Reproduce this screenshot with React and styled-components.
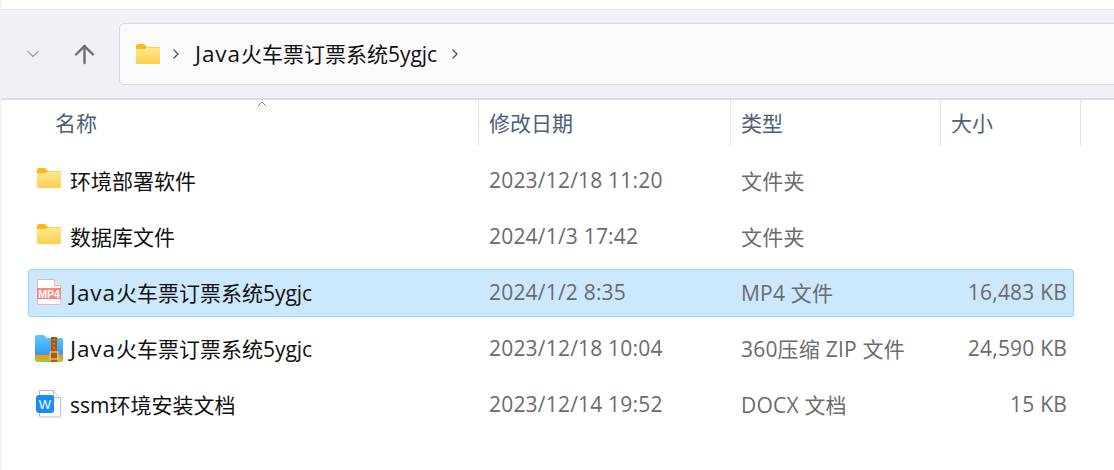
import React from "react";
import styled, { createGlobalStyle } from "styled-components";
import { ChevronDown, ChevronRight, ArrowUp, ChevronUp } from "lucide-react";

const FONT = `"Open Sans", "Noto Sans", "Noto Sans CJK SC", sans-serif`;

const Global = createGlobalStyle`
  html, body { margin: 0; padding: 0; background: #fff; }
  body { font-family: ${FONT}; width: 1114px; height: 470px; overflow: hidden; }
`;

const Page = styled.div`
  width: 1114px;
  height: 470px;
  box-sizing: border-box;
  padding-top: 9px;
  border-left: 1px solid #f0f0f0;
  overflow: hidden;
`;

const Toolbar = styled.div`
  height: 91px;
  margin-left: -1px;
  box-sizing: border-box;
  background: #f0f1f6;
  border-top: 1px solid #e6e6e8;
  border-bottom: 2px solid #dcdde0;
  display: flex;
  align-items: center;
  padding-left: 23px;
`;

const NavButton = styled.div`
  display: flex;
  align-items: center;
  justify-content: center;
  width: ${p => p.$w}px;
  margin-left: ${p => p.$ml || 0}px;
  color: ${p => p.$color};
`;

const AddressBox = styled.div`
  flex: 1;
  height: 62px;
  margin-right: -20px;
  box-sizing: border-box;
  background: #fafafd;
  border: 1px solid #d9d9dc;
  border-radius: 5px;
  display: flex;
  align-items: center;
  padding-left: 15px;
`;

const Crumb = styled.span`
  font-size: 21px;
  color: #111;
  margin: 0 10px 0 11px;
  line-height: 28px;
`;

const Sep = styled.span`
  display: flex;
  color: #555;
  margin-left: ${p => p.$ml || 0}px;
`;

const WideLatin = styled.span`
  font-size: 22.500px;
  letter-spacing: 0.900px;
`;

const Header = styled.div`
  display: grid;
  grid-template-columns: 478px 252px 210px 140px;
  height: 46px;
  position: relative;
`;

const HeadCell = styled.div`
  box-sizing: border-box;
  border-right: 1px solid #e4e4e4;
  padding-left: ${p => p.$pl || 10}px;
  font-size: 21px;
  line-height: 46px;
  color: #4c607a;
`;

const SortArrow = styled.div`
  position: absolute;
  left: 253px;
  top: -4px;
  color: #666;
  display: flex;
`;

const List = styled.div`
  display: flex;
  flex-direction: column;
  gap: 8px;
  margin-left: 27px;
  width: 1046px;
  padding-top: 11px;
`;

const Row = styled.div`
  display: grid;
  grid-template-columns: 450px 252px 210px 134px;
  height: 48px;
  box-sizing: border-box;
  align-items: center;
  padding-bottom: 2px;
  border: 1px solid ${p => (p.$selected ? "#99d1ff" : "transparent")};
  border-radius: 3px;
  background: ${p => (p.$selected ? "#cce8ff" : "transparent")};
`;

const NameCell = styled.div`
  font-size: 21px;
  line-height: 28px;
  color: #111;
  position: relative;
  padding: 2px 0 0 41px;
  white-space: nowrap;
`;

const IconSlot = styled.div`
  position: absolute;
  left: 4px;
  top: 50%;
  width: 32px;
  height: 32px;
  margin-top: ${p => p.$top}px;
  display: flex;
  align-items: center;
  justify-content: center;
`;

const Cell = styled.div`
  font-size: 21px;
  letter-spacing: 0.2px;
  color: #6b6b6b;
  padding-left: 10px;
  white-space: nowrap;
`;

const SizeCell = styled(Cell)`
  text-align: right;
  padding: 0 8px 0 0;
`;

const FolderIcon = ({ id }) => (
  <svg width="26" height="22" viewBox="0 0 26 22">
    <defs>
      <linearGradient id={id} x1="0" y1="0" x2="0" y2="1">
        <stop offset="0" stopColor="#ffe88f" />
        <stop offset="1" stopColor="#fdcf52" />
      </linearGradient>
    </defs>
    <path d="M1 3a2 2 0 0 1 2-2h6l3 3h12a1 1 0 0 1 1 1v3H1z" fill="#fdb813" />
    <path d="M1 6h9l2-1.500h12a1 1 0 0 1 1 1V20a1 1 0 0 1-1 1H2a1 1 0 0 1-1-1z" fill={`url(#${id})`} />
  </svg>
);

const Mp4Icon = () => (
  <svg width="26" height="28" viewBox="0 0 26 28">
    <path d="M1.500 1.500h17l6 6v18a1 1 0 0 1-1 1h-21a1 1 0 0 1-1-1z" fill="#fff" stroke="#f3b5a8" />
    <path d="M18.500 1.500v6h6" fill="#fde3dc" stroke="#f3b5a8" />
    <rect x="1" y="10" width="24" height="11" fill="#ef8a7a" />
    <text x="13" y="19.500" textAnchor="middle" fontSize="10.500" fontWeight="700" fill="#fff" fontFamily="Liberation Sans, sans-serif">MP4</text>
  </svg>
);

const ZipIcon = () => (
  <svg width="30" height="29" viewBox="0 0 30 29">
    <defs>
      <linearGradient id="zipb" x1="0" y1="0" x2="0" y2="1">
        <stop offset="0" stopColor="#63c9fb" />
        <stop offset="1" stopColor="#2c9cf5" />
      </linearGradient>
    </defs>
    <path d="M1 22h28v4a2 2 0 0 1-2 2H3a2 2 0 0 1-2-2z" fill="#8fd13f" />
    <rect x="1" y="20" width="28" height="5" fill="#ff9412" />
    <path d="M1 3a2 2 0 0 1 2-2h7l3 3h14a2 2 0 0 1 2 2v15H1z" fill="url(#zipb)" />
    <rect x="17" y="3" width="6" height="25" fill="#b5560f" />
    <rect x="16" y="18" width="8" height="7" fill="none" stroke="#f3c98b" strokeWidth="1.200" />
    <path d="M20 5v11" stroke="#d99450" strokeWidth="1.500" strokeDasharray="1.500 2.500" />
  </svg>
);

const DocIcon = () => (
  <svg width="26" height="28" viewBox="0 0 26 28">
    <path d="M3.500 .500h14l7 7v18.500a1 1 0 0 1-1 1h-19a1 1 0 0 1-1-1z" fill="#fff" stroke="#b9bec8" />
    <path d="M17.500 .500v7h7" fill="#eef0f3" stroke="#b9bec8" />
    <rect x="0" y="5" width="18" height="18" rx="3" fill="#1a8cff" />
    <text x="9" y="19" textAnchor="middle" fontSize="13" fill="#fff" fontFamily="Liberation Sans, sans-serif">W</text>
  </svg>
);

const JavaName = () => (
  <>
    <WideLatin>Java</WideLatin>火车票订票系统5ygjc
  </>
);

const rows = [
  { name: "环境部署软件", date: "2023/12/18 11:20", type: "文件夹", size: "", icon: <FolderIcon id="f1" />, top: -18 },
  { name: "数据库文件", date: "2024/1/3 17:42", type: "文件夹", size: "", icon: <FolderIcon id="f2" />, top: -18 },
  { name: <JavaName />, date: "2024/1/2 8:35", type: "MP4 文件", size: "16,483 KB", icon: <Mp4Icon />, top: -16, selected: true },
  { name: <JavaName />, date: "2023/12/18 10:04", type: "360压缩 ZIP 文件", size: "24,590 KB", icon: <ZipIcon />, top: -16 },
  { name: "ssm环境安装文档", date: "2023/12/14 19:52", type: "DOCX 文档", size: "15 KB", icon: <DocIcon />, top: -16 },
];

export default function App() {
  return (
    <Page>
      <Global />
      <Toolbar>
        <NavButton $w={20} $color="#a3a3a6"><ChevronDown size={22} strokeWidth={1.600} /></NavButton>
        <NavButton $w={70} $ml={6} $color="#6e6e70"><ArrowUp size={29} strokeWidth={2} /></NavButton>
        <AddressBox>
          <FolderIcon id="f0" />
          <Sep $ml={7}><ChevronRight size={16} strokeWidth={2} /></Sep>
          <Crumb><JavaName /></Crumb>
          <Sep><ChevronRight size={16} strokeWidth={2} /></Sep>
        </AddressBox>
      </Toolbar>
      <Header>
        <HeadCell $pl={54}>名称</HeadCell>
        <HeadCell>修改日期</HeadCell>
        <HeadCell>类型</HeadCell>
        <HeadCell>大小</HeadCell>
        <SortArrow><ChevronUp size={16} strokeWidth={1.200} /></SortArrow>
      </Header>
      <List>
        {rows.map((r, i) => (
          <Row key={i} $selected={r.selected}>
            <NameCell><IconSlot $top={r.top}>{r.icon}</IconSlot>{r.name}</NameCell>
            <Cell>{r.date}</Cell>
            <Cell>{r.type}</Cell>
            <SizeCell>{r.size}</SizeCell>
          </Row>
        ))}
      </List>
    </Page>
  );
}
